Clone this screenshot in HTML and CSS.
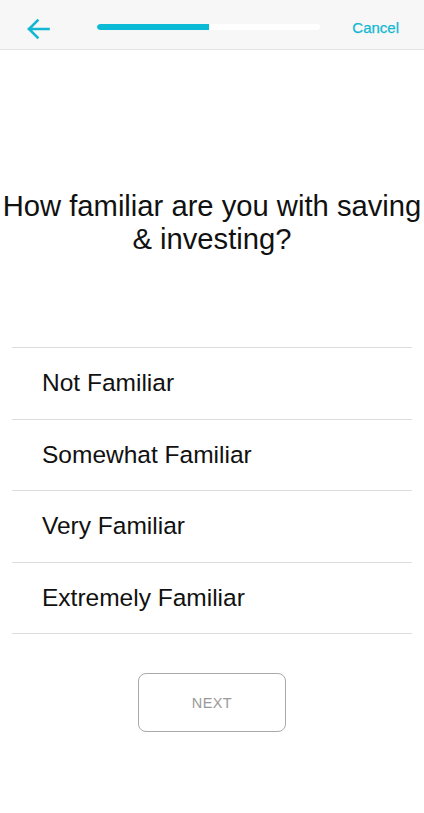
FILE: index.html
```html
<!DOCTYPE html>
<html lang="en">
<head>
<meta charset="utf-8">
<title>Familiarity</title>
<link rel="stylesheet" href="styles.css">
</head>
<body>
<div class="screen">
  <header class="topbar">
    <svg class="back" width="24" height="22" viewBox="0 0 24 22" aria-hidden="true">
      <path d="M22.5 11 H3 M11.5 2.5 L3 11 L11.5 19.5" fill="none" stroke="#12b8d3" stroke-width="2.6" stroke-linecap="square"/>
    </svg>
    <div class="progress"><div class="progress-fill" style="width:50.2%"></div></div>
    <span class="cancel">Cancel</span>
  </header>
  <main class="content">
    <h1 class="question">How familiar are you with saving &amp; investing?</h1>
    <ul class="options">
      <li class="option">Not Familiar</li>
      <li class="option">Somewhat Familiar</li>
      <li class="option">Very Familiar</li>
      <li class="option">Extremely Familiar</li>
    </ul>
    <div class="actions">
      <button class="next" type="button">NEXT</button>
    </div>
  </main>
</div>
</body>
</html>
```
FILE: styles.css
```css
* { box-sizing: border-box; }
html, body {
  margin: 0;
  padding: 0;
  background: #ffffff;
}
body {
  font-family: "Liberation Sans", Arial, sans-serif;
  color: #111111;
}
.screen {
  width: 424px;
  min-height: 813px;
  display: flex;
  flex-direction: column;
}
.topbar {
  height: 50px;
  background: #f7f7f7;
  border-bottom: 1px solid #e4e4e4;
  display: flex;
  align-items: center;
  padding: 8px 25px 0 26px;
}
.back {
  display: block;
  flex: none;
}
.progress {
  margin-left: 47px;
  width: 223px;
  height: 6px;
  border-radius: 3px;
  background: #ffffff;
  overflow: hidden;
  margin-top: -4px;
}
.progress-fill {
  height: 100%;
  background: #0bbad5;
  border-radius: 3px 0 0 3px;
}
.cancel {
  margin-left: auto;
  color: #12b8d3;
  font-size: 15px;
  margin-top: -3px;
  -webkit-text-stroke: 0.25px #12b8d3;
}
.content {
  display: flex;
  flex-direction: column;
}
.question {
  margin: 140px 0 0;
  font-weight: normal;
  font-size: 29.2px;
  line-height: 33px;
  text-align: center;
  color: #111;
}
.options {
  list-style: none;
  margin: 91px 12px 0;
  padding: 0;
  border-bottom: 1px solid #dcdcdc;
}
.option {
  height: 71.5px;
  border-top: 1px solid #dcdcdc;
  display: flex;
  align-items: center;
  padding-left: 30px;
  font-size: 24.5px;
  color: #111;
}
.actions {
  display: flex;
  justify-content: center;
  padding-top: 39px;
}
.next {
  width: 148px;
  height: 59px;
  border: 1px solid #a9a9a9;
  border-radius: 8px;
  background: #ffffff;
  color: #9a9a9a;
  font-family: "Liberation Sans", Arial, sans-serif;
  font-size: 14.5px;
  letter-spacing: 0.4px;
}
```
